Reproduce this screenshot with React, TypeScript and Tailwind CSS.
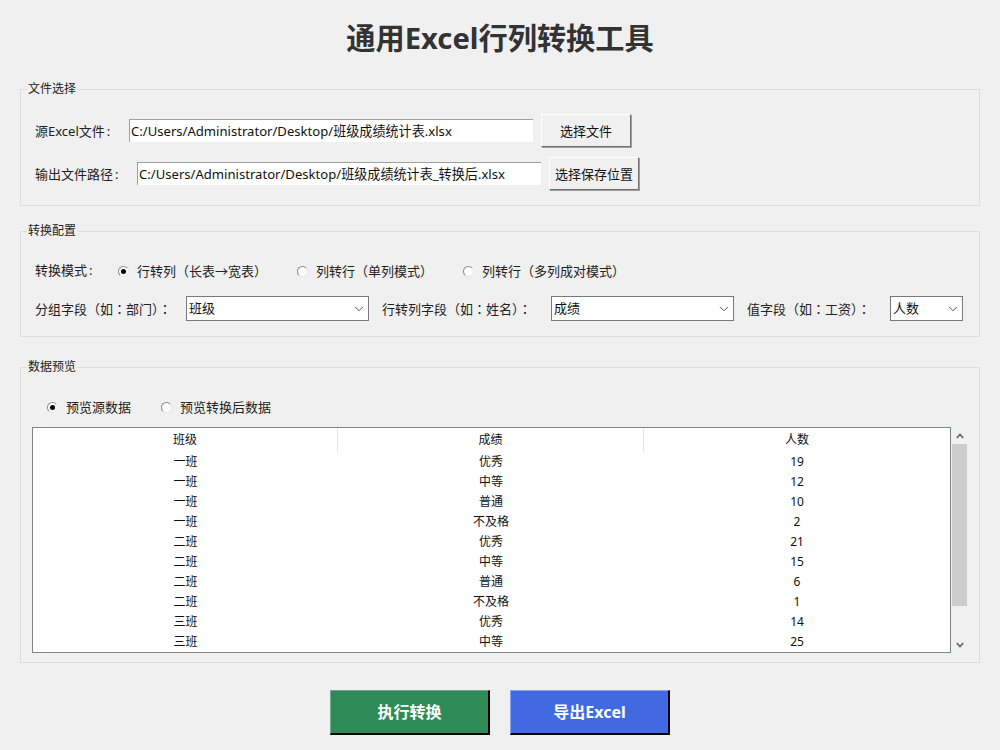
import type { ReactNode } from "react";

const font = "font-['Noto_Sans','Noto_Sans_CJK_SC',sans-serif]";

const rows = [
  ["一班", "优秀", "19"],
  ["一班", "中等", "12"],
  ["一班", "普通", "10"],
  ["一班", "不及格", "2"],
  ["二班", "优秀", "21"],
  ["二班", "中等", "15"],
  ["二班", "普通", "6"],
  ["二班", "不及格", "1"],
  ["三班", "优秀", "14"],
  ["三班", "中等", "25"],
];

// the reference centres its full-width colons, the SC face sets them left
function Colon() {
  return <span className="font-['Noto_Sans_CJK_TC',sans-serif]">：</span>;
}

function Group({ title, className, children }: { title: string; className: string; children: ReactNode }) {
  return (
    <section className={`relative border border-[#dcdcdc] ${className}`}>
      <span className="absolute left-[6px] top-[-9px] bg-[#f0f0f0] px-[1px] text-[12px] leading-[16px] text-[#222]">
        {title}
      </span>
      {children}
    </section>
  );
}

function Radio({ label, checked, className = "" }: { label: string; checked?: boolean; className?: string }) {
  return (
    <div className={`flex items-center gap-[8px] ${className}`}>
      <span className="flex h-[11px] w-[11px] items-center justify-center rounded-full border border-[#8a8a8a] border-r-[#e8e8e8] border-b-[#e8e8e8] bg-white">
        {checked && <span className="h-[5px] w-[5px] rounded-full bg-black" />}
      </span>
      <span className="whitespace-nowrap text-[13px] leading-[18px] text-[#222]">{label}</span>
    </div>
  );
}

function FileRow({ label, value, button, labelWidth }: { label: string; value: string; button: string; labelWidth: string }) {
  return (
    <div className="flex h-[33px] items-center">
      <span className={`whitespace-nowrap pt-[2px] text-[13px] text-[#222] ${labelWidth}`}>
        {label}
        <span className="ml-[2px]">:</span>
      </span>
      <div className="mb-[1px] h-[23px] w-[404px] truncate border-t border-l border-t-[#a0a0a0] border-l-[#a0a0a0] bg-white pl-[1px] text-[13.1px] leading-[22px] text-[#111]">
        {value}
      </div>
      <button className="ml-[8px] h-[33px] w-[90px] border border-t-white border-l-white border-r-[#707070] border-b-[#707070] bg-[#f0f0f0] pt-[2px] text-[13px] text-[#111] shadow-[1px_1px_0_#a0a0a0]">
        {button}
      </button>
    </div>
  );
}

function Select({ value, className }: { value: string; className: string }) {
  return (
    <div className={`flex h-[25px] items-center justify-between border border-[#7a7a7a] bg-white pl-[2px] pr-[4px] text-[13px] text-[#111] ${className}`}>
      <span className="pt-[1px]">{value}</span>
      <svg width="10" height="6" viewBox="0 0 10 6" fill="none" stroke="#555" strokeWidth="1">
        <path d="M1 .8 5 4.8 9 .8" />
      </svg>
    </div>
  );
}

export default function App() {
  return (
    <div className={`h-[750px] w-[1000px] overflow-hidden bg-[#f0f0f0] px-[20px] ${font}`}>
      <h1 className="flex h-[89px] items-start justify-center pt-[15px] text-[29.2px] leading-[46px] font-bold text-[#333]">
        通用Excel行列转换工具
      </h1>

      <Group title="文件选择" className="h-[117px] w-[960px] pt-[24px] pl-[14px]">
        <div className="flex flex-col gap-[10px]">
          <FileRow label="源Excel文件" value="C:/Users/Administrator/Desktop/班级成绩统计表.xlsx" button="选择文件" labelWidth="w-[94px]" />
          <FileRow label="输出文件路径" value="C:/Users/Administrator/Desktop/班级成绩统计表_转换后.xlsx" button="选择保存位置" labelWidth="w-[102px]" />
        </div>
      </Group>

      <Group title="转换配置" className="mt-[25px] h-[106px] w-[960px] pt-[30px] pl-[14px]">
        <div className="flex h-[18px] items-center">
          <span className="w-[83px] whitespace-nowrap text-[13px] text-[#222]">
            转换模式
            <span className="ml-[2px]">:</span>
          </span>
          <Radio label="行转列（长表→宽表）" checked className="w-[179px]" />
          <Radio label="列转行（单列模式）" className="w-[166px]" />
          <Radio label="列转行（多列成对模式）" />
        </div>
        <div className="mt-[16px] flex items-center text-[13px] text-[#222]">
          <span className="w-[151px] whitespace-nowrap pt-[1px]">
            分组字段（如<Colon />部门）<Colon />
          </span>
          <Select value="班级" className="w-[183px]" />
          <span className="ml-[13px] w-[169px] whitespace-nowrap pt-[1px]">
            行转列字段（如<Colon />姓名）<Colon />
          </span>
          <Select value="成绩" className="w-[183px]" />
          <span className="ml-[13px] w-[143px] whitespace-nowrap pt-[1px]">
            值字段（如<Colon />工资）<Colon />
          </span>
          <Select value="人数" className="w-[73px]" />
        </div>
      </Group>

      <Group title="数据预览" className="mt-[30px] h-[296px] w-[960px] pt-[30px] pl-[11px]">
        <div className="flex h-[18px] items-center pl-[15px]">
          <Radio label="预览源数据" checked className="w-[114px]" />
          <Radio label="预览转换后数据" />
        </div>
        <div className="mt-[11px] flex">
          <div className="h-[226px] w-[919px] overflow-hidden border border-[#7f858c] bg-white text-[12px] leading-[20px] text-[#111]">
            <div className="flex h-[24px]">
              <div className="w-[305px] border-r border-[#e5e5e5] pt-[2px] text-center">班级</div>
              <div className="w-[306px] border-r border-[#e5e5e5] pt-[2px] text-center">成绩</div>
              <div className="w-[306px] pt-[2px] text-center">人数</div>
            </div>
            {rows.map((row, i) => (
              <div key={i} className="flex h-[20px]">
                {row.map((cell, j) => (
                  <div key={j} className={j === 0 ? "w-[305px] text-center" : "w-[306px] text-center"}>
                    {cell}
                  </div>
                ))}
              </div>
            ))}
          </div>
          <div className="ml-[1px] flex h-[226px] w-[15px] flex-col items-center justify-between">
            <div className="flex h-[17px] items-center">
              <svg width="8" height="6" viewBox="0 0 8 6" fill="none" stroke="#606060" strokeWidth="1.6">
                <path d="M.8 5 4 1.5 7.2 5" />
              </svg>
            </div>
            <div className="mb-[30px] h-[162px] w-[15px] shrink-0 bg-[#cdcdcd]" />
            <div className="flex h-[17px] items-center">
              <svg width="8" height="6" viewBox="0 0 8 6" fill="none" stroke="#606060" strokeWidth="1.6">
                <path d="M.8 1 4 4.5 7.2 1" />
              </svg>
            </div>
          </div>
        </div>
      </Group>

      <div className="mt-[27px] flex justify-center gap-[20px] text-[16px] font-bold text-white">
        <button className="h-[45px] w-[160px] border border-t-[#6fa98a] border-l-[#6fa98a] border-r-2 border-b-2 border-r-black border-b-black bg-[#2e8b57]">
          执行转换
        </button>
        <button className="h-[45px] w-[160px] border border-t-[#8ba3f0] border-l-[#8ba3f0] border-r-2 border-b-2 border-r-black border-b-black bg-[#4169e1]">
          导出Excel
        </button>
      </div>
    </div>
  );
}
